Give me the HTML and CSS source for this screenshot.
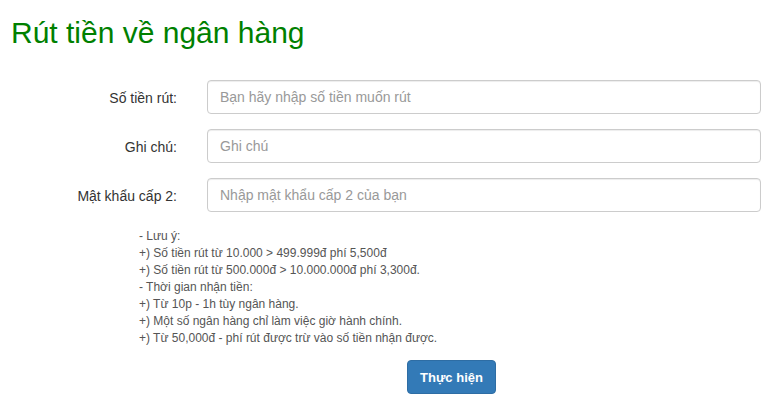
FILE: index.html
```html
<!DOCTYPE html>
<html lang="vi">
<head>
<meta charset="utf-8">
<link rel="stylesheet" href="styles.css">
</head>
<body>
<div class="page">
  <h1 class="title">Rút tiền về ngân hàng</h1>
  <form class="form">
    <div class="group">
      <label class="label">Số tiền rút:</label>
      <input class="input" type="text" placeholder="Bạn hãy nhập số tiền muốn rút">
    </div>
    <div class="group">
      <label class="label">Ghi chú:</label>
      <input class="input" type="text" placeholder="Ghi chú">
    </div>
    <div class="group">
      <label class="label">Mật khẩu cấp 2:</label>
      <input class="input" type="password" placeholder="Nhập mật khẩu cấp 2 của bạn">
    </div>
    <div class="notes">
      <div>- Lưu ý:</div>
      <div>+) Số tiền rút từ 10.000 &gt; 499.999đ phí 5,500đ</div>
      <div>+) Số tiền rút từ 500.000đ &gt; 10.000.000đ phí 3,300đ.</div>
      <div>- Thời gian nhận tiền:</div>
      <div>+) Từ 10p - 1h tùy ngân hàng.</div>
      <div>+) Một số ngân hàng chỉ làm việc giờ hành chính.</div>
      <div>+) Từ 50,000đ - phí rút được trừ vào số tiền nhận được.</div>
    </div>
    <div class="actions">
      <button class="btn" type="button">Thực hiện</button>
    </div>
  </form>
</div>
</body>
</html>
```
FILE: styles.css
```css
* { box-sizing: border-box; }
html, body { margin: 0; padding: 0; background: #fff; }
body {
  font-family: "Liberation Sans", Arial, sans-serif;
  font-size: 14px;
  color: #333;
}
.page { padding: 16px 3px 0 10px; }
.title {
  margin: 0 0 31px 1px;
  font-size: 30px;
  font-weight: normal;
  line-height: 33px;
  color: #008000;
}
.form { display: flex; flex-direction: column; }
.group {
  display: grid;
  grid-template-columns: 167px 554px;
  column-gap: 30px;
  margin-bottom: 15px;
}
.label {
  text-align: right;
  padding-top: 8px;
  line-height: 20px;
  color: #333;
}
.input {
  height: 34px;
  padding: 6px 12px;
  font-family: inherit;
  font-size: 14px;
  color: #555;
  border: 1px solid #ccc;
  border-radius: 4px;
  box-shadow: inset 0 1px 1px rgba(0,0,0,0.075);
  outline: none;
}
.input::placeholder { color: #999; }
.notes {
  margin: 1px 0 0 129px;
  font-size: 12px;
  line-height: 17px;
  color: #555;
}
.actions { margin: 13px 0 0 397px; }
.btn {
  width: 89px;
  height: 34px;
  padding: 0;
  font-family: inherit;
  font-size: 13px;
  font-weight: bold;
  color: #fff;
  background: #337ab7;
  border: 1px solid #2e6da4;
  border-radius: 4px;
}
```
